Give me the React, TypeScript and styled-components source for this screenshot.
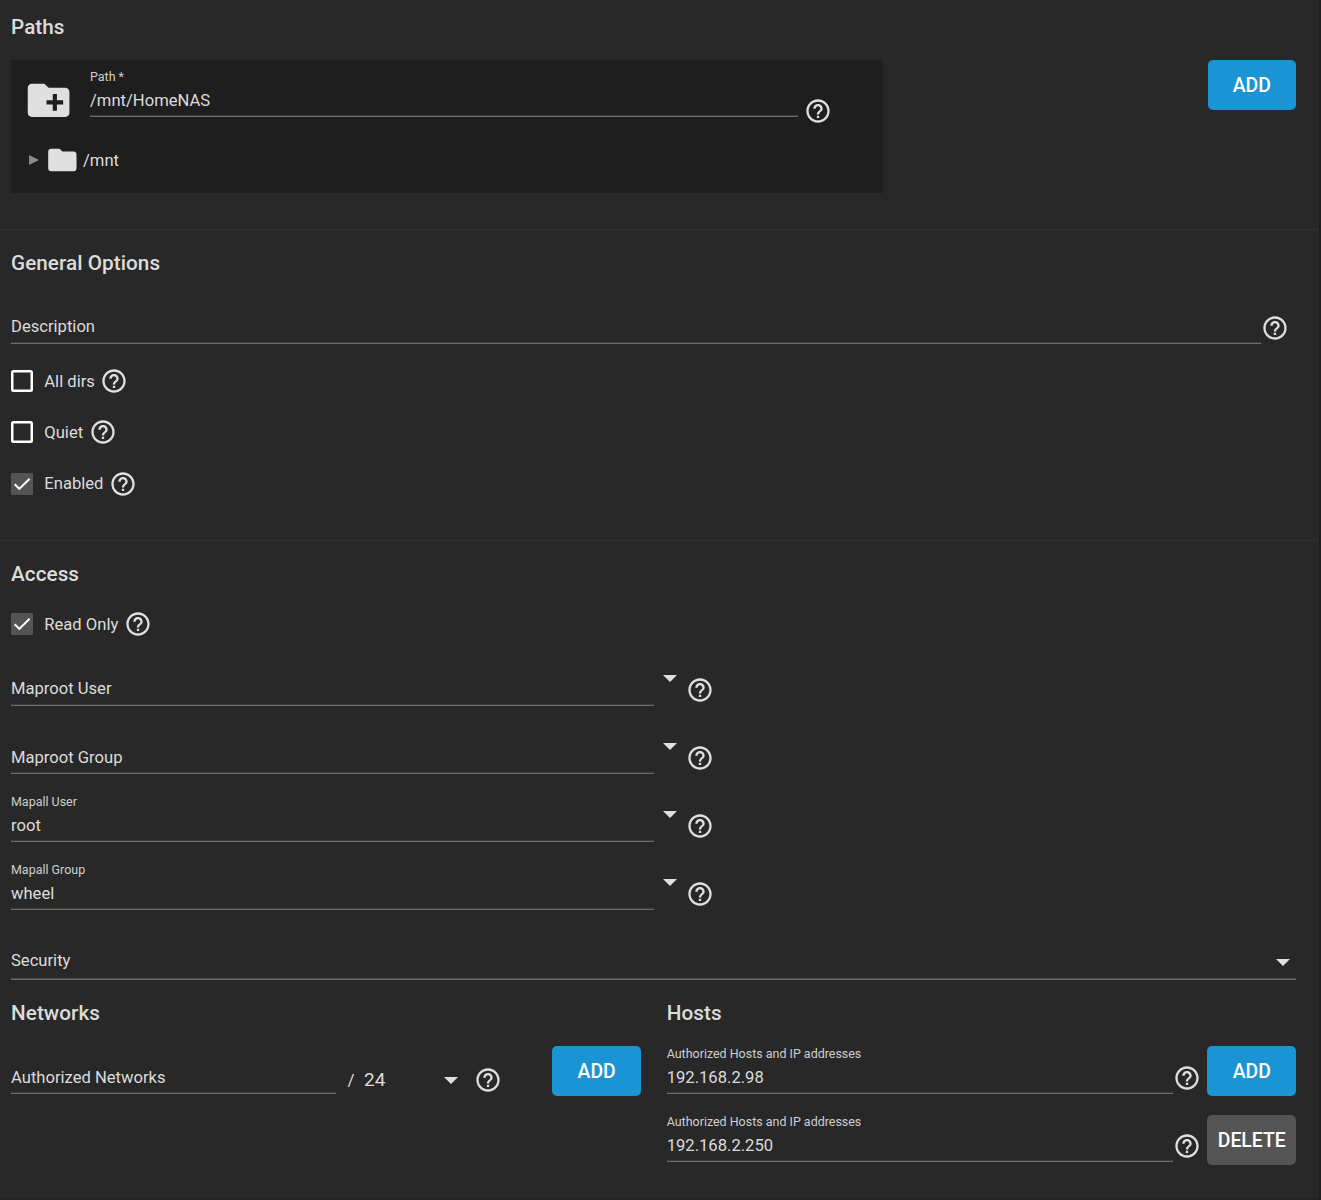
import React from 'react';
import styled, { createGlobalStyle } from 'styled-components';

const GlobalStyle = createGlobalStyle`
  *, *::before, *::after { box-sizing: border-box; }
  body { margin: 0; background: #1e1e1e; }
`;

const Page = styled.main`
  width: 1318.5px;
  height: 1200px;
  overflow: hidden;
  background: #282828;
  border-bottom: 2px solid #222;
  color: #dcdcdc;
  font-family: Roboto, 'Liberation Sans', sans-serif;
  font-size: 16.6px;
`;

const Section = styled.section<{ $height?: number; $top: number }>`
  height: ${(p) => (p.$height ? `${p.$height}px` : 'auto')};
  padding: ${(p) => p.$top}px 22.5px 0 11px;
  border-bottom: ${(p) => (p.$height ? '1px solid #313131' : 'none')};
`;

const Title = styled.h2<{ $gap: number }>`
  margin: 0 0 ${(p) => p.$gap}px;
  font-size: 20.7px;
  font-weight: 500;
  line-height: 28px;
  letter-spacing: 0.06px;
`;

const Between = styled.div`
  display: flex;
  justify-content: space-between;
  align-items: flex-start;
`;

const Panel = styled.div`
  width: 872.3px;
  height: 133px;
  padding: 9px 0 0 12.5px;
  background: #1e1e1e;
`;

const PathRow = styled.div`
  display: flex;
  align-items: flex-start;
  height: 57px;
`;

const TreeRow = styled.div`
  display: flex;
  align-items: center;
  height: 34px;
  margin-top: 17px;
  padding-left: 5.5px;
`;

const TreeLabel = styled.span`
  margin-left: 4px;
`;

const Toggle = styled.span`
  border-left: 10px solid #8a8a8a;
  border-top: 5.5px solid transparent;
  border-bottom: 5.5px solid transparent;
  margin-right: 6px;
`;

const FieldBox = styled.div<{ $width: number; $lift: number }>`
  display: flex;
  flex-direction: column;
  justify-content: flex-end;
  flex: none;
  width: ${(p) => p.$width}px;
  height: 48px;
  padding-bottom: ${(p) => 3 + p.$lift}px;
  border-bottom: 1px solid #6c6c6c;
  box-shadow: inset 0 -1px #3c3c3c;
`;

const FieldLabel = styled.span`
  margin-bottom: 4px;
  font-size: 12.45px;
  line-height: 16px;
  color: #cfcfcf;
  letter-spacing: 0.01px;
`;

const FieldValue = styled.span`
  line-height: 24px;
  height: 24px;
`;

const SelectBox = styled.div`
  display: flex;
  justify-content: space-between;
  align-items: flex-start;
  height: 50px;
  padding: 19px 6px 0 0;
  border-bottom: 1px solid #6c6c6c;
  box-shadow: inset 0 -1px #4a4a4a;
`;

const IconSlot = styled.span<{ $left?: number; $top?: number; $right?: number }>`
  display: flex;
  flex: none;
  margin: ${(p) => p.$top ?? 0}px ${(p) => p.$right ?? 0}px 0 ${(p) => p.$left ?? 0}px;
`;

const Caret = styled.span<{ $left: number; $top: number }>`
  flex: none;
  margin: ${(p) => p.$top}px 0 0 ${(p) => p.$left}px;
  border-top: 7px solid #e0e0e0;
  border-left: 7px solid transparent;
  border-right: 7px solid transparent;
`;

const Button = styled.button<{ $muted?: boolean }>`
  flex: none;
  width: 88.5px;
  height: 50px;
  padding: 1px 0 0;
  border: 0;
  border-radius: 5px;
  background: ${(p) => (p.$muted ? '#545454' : '#1a94d2')};
  color: #fff;
  font: 500 19.4px/49px Roboto, 'Liberation Sans', sans-serif;
  white-space: nowrap;
`;

const CheckList = styled.div`
  display: flex;
  flex-direction: column;
  gap: 23.2px;
`;

const CheckRow = styled.label`
  display: flex;
  align-items: center;
  height: 28px;
`;

const CheckBox = styled.span<{ $checked: boolean }>`
  display: flex;
  width: 22px;
  height: 22px;
  margin-right: 11.3px;
  border-radius: ${(p) => (p.$checked ? 1 : 2.5)}px;
  border: ${(p) => (p.$checked ? 'none' : '2px solid #fff')};
  box-shadow: ${(p) => (p.$checked ? 'none' : 'inset 0 0 0 0.5px #fff')};
  background: ${(p) => (p.$checked ? '#545454' : 'transparent')};
`;

const FieldRow = styled.div<{ $height: number }>`
  display: flex;
  align-items: flex-start;
  height: ${(p) => p.$height}px;
`;

const MapRows = styled.div`
  padding-top: 20px;
`;

const Columns = styled.div`
  display: grid;
  grid-template-columns: 655.7px 1fr;
  padding-top: 19px;
`;

const Mask = styled.span<{ $left: number }>`
  margin: 22px 0 0 ${(p) => p.$left}px;
  font-size: 19px;
  line-height: 24px;
`;

const Slash = styled(Mask)`
  font-size: 17px;
`;

function Help() {
  return (
    <svg width="28" height="28" viewBox="0 0 24 24" fill="#dfdfdf">
      <path d="M11 18h2v-2h-2v2zm1-16C6.48 2 2 6.48 2 12s4.48 10 10 10 10-4.48 10-10S17.52 2 12 2zm0 18c-4.41 0-8-3.59-8-8s3.59-8 8-8 8 3.59 8 8-3.59 8-8 8zm0-14c-2.21 0-4 1.79-4 4h2c0-1.1.9-2 2-2s2 .9 2 2c0 2-3 1.75-3 5h2c0-2.25 3-2.5 3-5 0-2.21-1.79-4-4-4z" />
    </svg>
  );
}

type FieldProps = { width: number; label?: string; value: string; lift?: number };

function Field({ width, label, value, lift = 0 }: FieldProps) {
  return (
    <FieldBox $width={width} $lift={lift}>
      {label && <FieldLabel>{label}</FieldLabel>}
      <FieldValue>{value}</FieldValue>
    </FieldBox>
  );
}

function Check({ label, checked = false }: { label: string; checked?: boolean }) {
  return (
    <CheckRow>
      <CheckBox $checked={checked}>
        {checked && (
          <svg width="22" height="22" viewBox="0 0 22 22" fill="none" stroke="#fff" strokeWidth="2">
            <path d="M3.7 11.3l4.6 4.6L18.6 5.7" />
          </svg>
        )}
      </CheckBox>
      {label}
      <IconSlot $left={5.5}><Help /></IconSlot>
    </CheckRow>
  );
}

const mappings = [
  { value: 'Maproot User', lift: 1 },
  { value: 'Maproot Group' },
  { label: 'Mapall User', value: 'root' },
  { label: 'Mapall Group', value: 'wheel' },
];

const hosts = [
  { address: '192.168.2.98', action: 'ADD' },
  { address: '192.168.2.250', action: 'DELETE' },
];

export default function App() {
  return (
    <>
      <GlobalStyle />
      <Page>
        <Section $height={230} $top={13}>
          <Title $gap={19}>Paths</Title>
          <Between>
            <Panel>
              <PathRow>
                <IconSlot $top={6.4} $right={16.5}>
                  <svg width="50" height="50" viewBox="0 0 24 24" fill="#dfdfdf">
                    <path transform="translate(-0.2 0.15)" d="M20 6h-8l-2-2H4c-1.11 0-1.99.89-1.99 2L2 18c0 1.11.89 2 2 2h16c1.11 0 2-.89 2-2V8c0-1.11-.89-2-2-2zm-1 8h-3v3h-2v-3h-3v-2h3V9h2v3h3v2z" />
                  </svg>
                </IconSlot>
                <Field width={707.5} label="Path *" value="/mnt/HomeNAS" />
                <IconSlot $left={6.5} $top={28.3}><Help /></IconSlot>
              </PathRow>
              <TreeRow>
                <Toggle />
                <svg width="34" height="34" viewBox="0 0 24 24" fill="#dfdfdf">
                  <path transform="translate(0.25 0)" d="M10 4H4c-1.1 0-1.99.9-1.99 2L2 18c0 1.1.9 2 2 2h16c1.1 0 2-.9 2-2V8c0-1.1-.9-2-2-2h-8l-2-2z" />
                </svg>
                <TreeLabel>/mnt</TreeLabel>
              </TreeRow>
            </Panel>
            <Button>ADD</Button>
          </Between>
        </Section>

        <Section $height={311} $top={19}>
          <Title $gap={19}>General Options</Title>
          <FieldRow $height={71.3}>
            <Field width={1250} value="Description" lift={1} />
            <IconSlot $top={18}><Help /></IconSlot>
          </FieldRow>
          <CheckList>
            <Check label="All dirs" />
            <Check label="Quiet" />
            <Check label="Enabled" checked />
          </CheckList>
        </Section>

        <Section $top={19}>
          <Title $gap={22}>Access</Title>
          <Check label="Read Only" checked />
          <MapRows>
            {mappings.map((m) => (
              <FieldRow key={m.value} $height={68}>
                <Field width={642.5} label={m.label} value={m.value} lift={m.lift} />
                <Caret $left={9.5} $top={16.7} />
                <IconSlot $left={9.4} $top={18}><Help /></IconSlot>
              </FieldRow>
            ))}
          </MapRows>
          <SelectBox>
            <FieldValue>Security</FieldValue>
            <Caret $left={0} $top={10} />
          </SelectBox>
          <Columns>
            <div>
              <Title $gap={19}>Networks</Title>
              <FieldRow $height={68}>
                <Field width={324.5} value="Authorized Networks" />
                <Slash $left={12}>/</Slash>
                <Mask $left={9.5}>24</Mask>
                <Caret $left={58.5} $top={31} />
                <IconSlot $left={16.5} $top={20}><Help /></IconSlot>
                <IconSlot $left={50}><Button>ADD</Button></IconSlot>
              </FieldRow>
            </div>
            <div>
              <Title $gap={19}>Hosts</Title>
              {hosts.map((h) => (
                <FieldRow key={h.address} $height={68}>
                  <Field width={506} label="Authorized Hosts and IP addresses" value={h.address} />
                  <IconSlot $top={18} $right={6.8}><Help /></IconSlot>
                  <IconSlot $top={h.action === 'DELETE' ? 1 : 0}>
                    <Button $muted={h.action === 'DELETE'}>{h.action}</Button>
                  </IconSlot>
                </FieldRow>
              ))}
            </div>
          </Columns>
        </Section>
      </Page>
    </>
  );
}
